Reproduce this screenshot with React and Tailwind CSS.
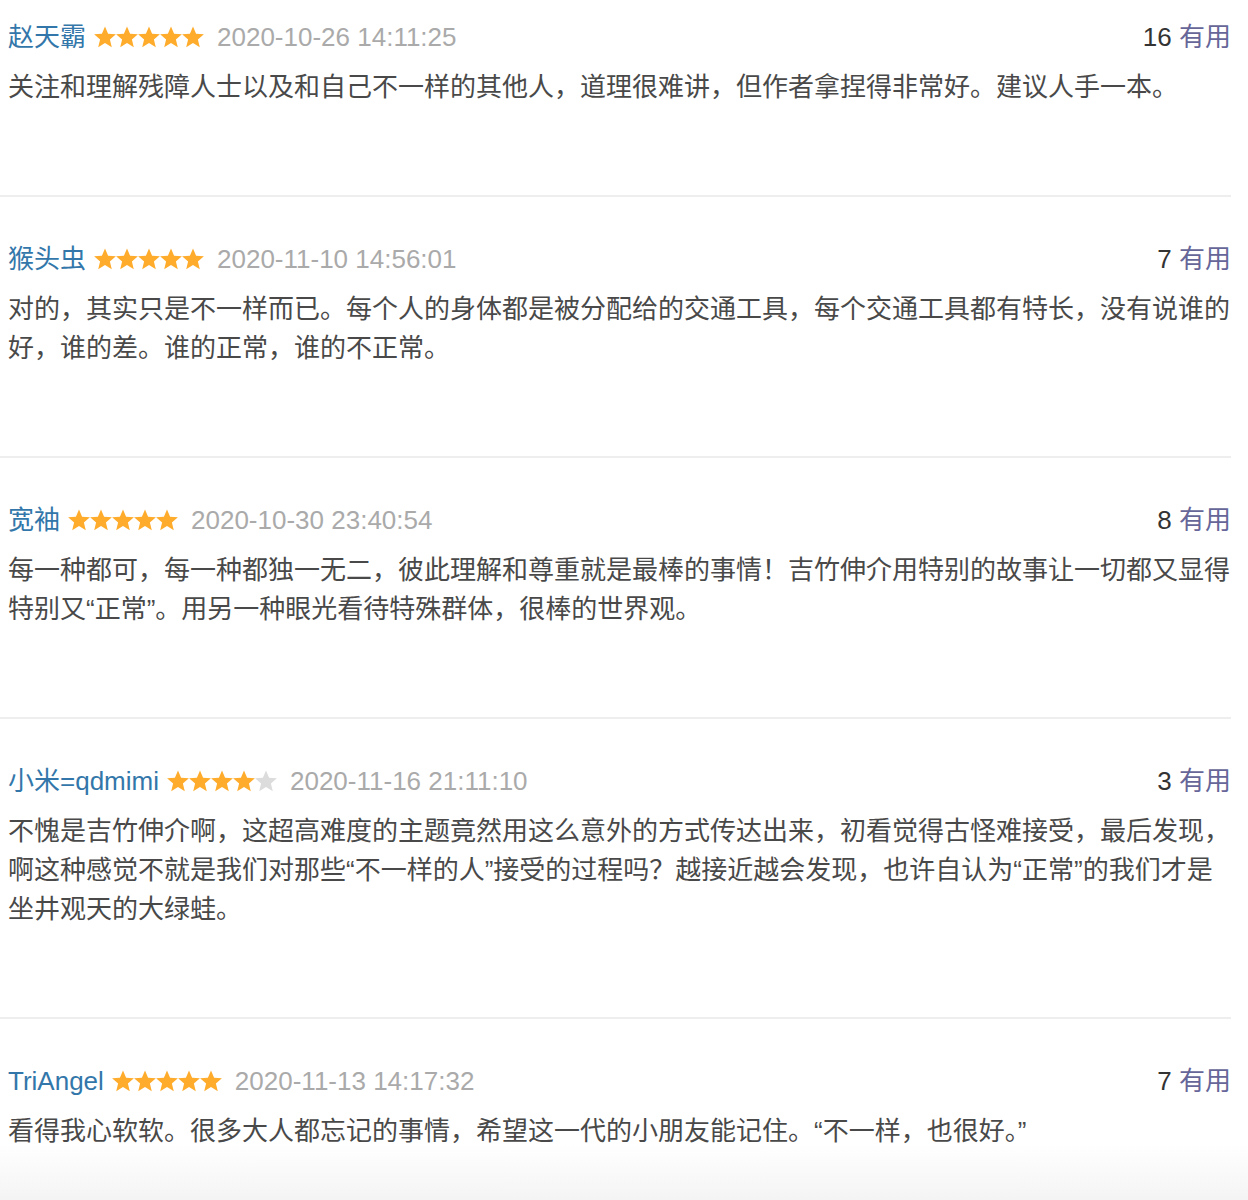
const comments = [
  {
    user: '赵天霸',
    rating: 5,
    time: '2020-10-26 14:11:25',
    votes: 16,
    text: '关注和理解残障人士以及和自己不一样的其他人，道理很难讲，但作者拿捏得非常好。建议人手一本。',
  },
  {
    user: '猴头虫',
    rating: 5,
    time: '2020-11-10 14:56:01',
    votes: 7,
    text: '对的，其实只是不一样而已。每个人的身体都是被分配给的交通工具，每个交通工具都有特长，没有说谁的好，谁的差。谁的正常，谁的不正常。',
  },
  {
    user: '宽袖',
    rating: 5,
    time: '2020-10-30 23:40:54',
    votes: 8,
    text: '每一种都可，每一种都独一无二，彼此理解和尊重就是最棒的事情！吉竹伸介用特别的故事让一切都又显得特别又“正常”。用另一种眼光看待特殊群体，很棒的世界观。',
  },
  {
    user: '小米=qdmimi',
    rating: 4,
    time: '2020-11-16 21:11:10',
    votes: 3,
    text: '不愧是吉竹伸介啊，这超高难度的主题竟然用这么意外的方式传达出来，初看觉得古怪难接受，最后发现，啊这种感觉不就是我们对那些“不一样的人”接受的过程吗？越接近越会发现，也许自认为“正常”的我们才是坐井观天的大绿蛙。',
  },
  {
    user: 'TriAngel',
    rating: 5,
    time: '2020-11-13 14:17:32',
    votes: 7,
    text: '看得我心软软。很多大人都忘记的事情，希望这一代的小朋友能记住。“不一样，也很好。”',
  },
]

// fatter five-point star, 22px cell
const starPoints =
  '11,0.5 14.1,7.8 21.9,8.3 15.9,13.5 17.8,21.3 11,17.1 4.2,21.3 6.1,13.5 0.1,8.3 7.9,7.8'

function Stars({ rating }) {
  return (
    <svg width="110" height="22" viewBox="0 0 110 22" className="shrink-0">
      {[0, 1, 2, 3, 4].map((i) => (
        <polygon
          key={i}
          points={starPoints}
          transform={`translate(${i * 22} 0)`}
          fill={i < rating ? '#ffac2d' : '#dcdcdc'}
        />
      ))}
    </svg>
  )
}

export default function App() {
  return (
    <div
      className="relative h-[1200px] w-[1248px] overflow-hidden bg-white"
      style={{ fontFamily: '"Liberation Sans", "Noto Sans CJK SC", sans-serif' }}
    >
      <div className="w-[1231px]">
        {comments.map((c, index) => (
          <div
            key={index}
            className={`border-b-2 border-[#eeeeee] pl-2 pb-[88px] ${index === 0 ? 'pt-[19px]' : 'pt-[44px]'}`}
          >
            <div className="flex h-9 items-center justify-between">
              <div className="flex items-center">
                <span className="text-[26px] text-[#3377aa]">{c.user}</span>
                <span className="ml-[8px] flex items-center">
                  <Stars rating={c.rating} />
                </span>
                <span className="ml-[13px] text-[26px] text-[#aaaaaa]">{c.time}</span>
              </div>
              <div className="text-[26px]">
                <span className="text-[#333333]">{c.votes}</span>{' '}
                <span className="text-[#666699]">有用</span>
              </div>
            </div>
            <p className="mt-[13px] text-[26px] leading-[39px] text-[#494949]">{c.text}</p>
          </div>
        ))}
      </div>
      <div className="pointer-events-none absolute bottom-0 left-0 right-0 h-[56px] bg-gradient-to-b from-white/0 to-[#f4f4f4]" />
    </div>
  )
}
